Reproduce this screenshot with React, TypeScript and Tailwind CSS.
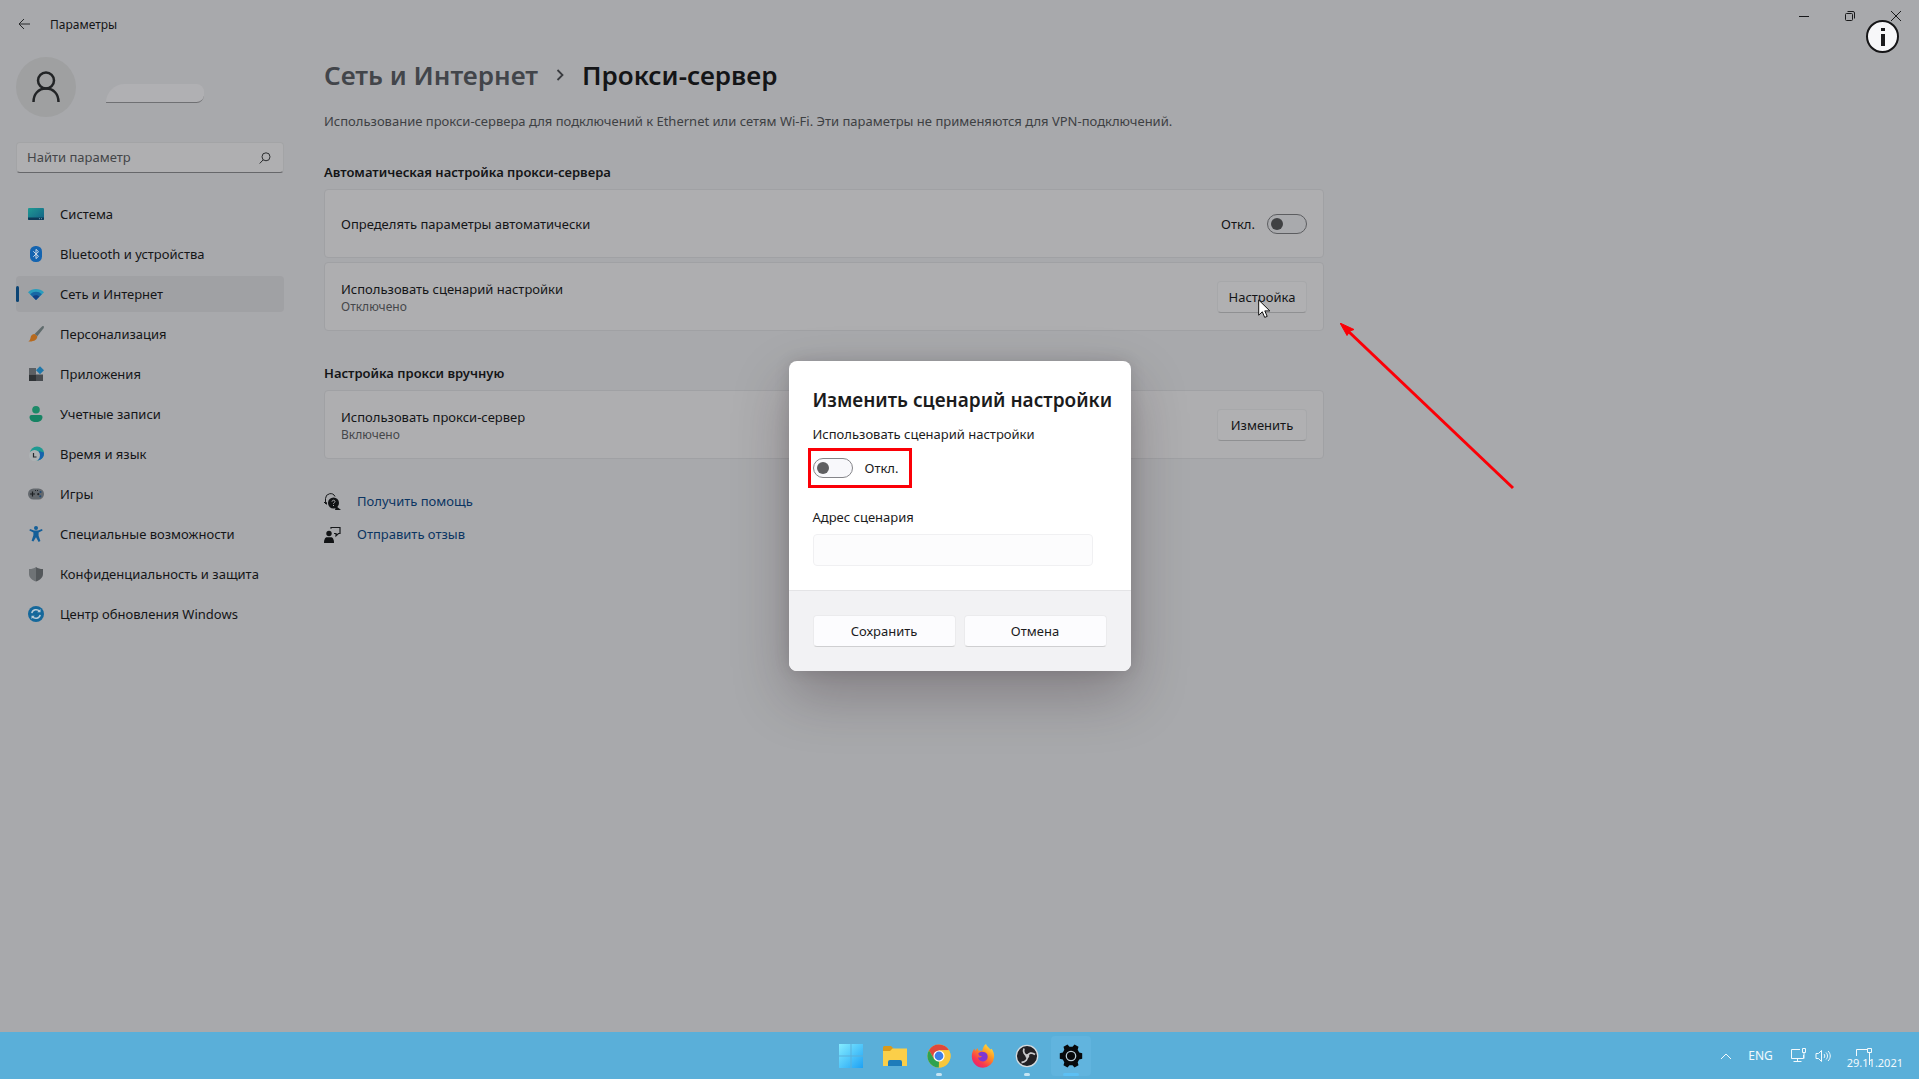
import { useState, type ReactNode } from "react";

const navItems = [
  { id: "system", label: "Система" },
  { id: "bluetooth", label: "Bluetooth и устройства" },
  { id: "network", label: "Сеть и Интернет" },
  { id: "personalization", label: "Персонализация" },
  { id: "apps", label: "Приложения" },
  { id: "accounts", label: "Учетные записи" },
  { id: "time", label: "Время и язык" },
  { id: "games", label: "Игры" },
  { id: "accessibility", label: "Специальные возможности" },
  { id: "privacy", label: "Конфиденциальность и защита" },
  { id: "update", label: "Центр обновления Windows" },
];

const navIcons: Record<string, ReactNode> = {
  system: (
    <>
      <defs>
        <linearGradient id="sys" x1="0" y1="0" x2="1" y2="1">
          <stop offset="0" stopColor="#1f9a93" />
          <stop offset="1" stopColor="#125f86" />
        </linearGradient>
      </defs>
      <rect y="2" width="16" height="12" rx="1" fill="url(#sys)" />
      <path d="M0 11.500h16V13a1 1 0 0 1-1 1H1a1 1 0 0 1-1-1z" fill="#0d3a58" />
      <path d="M11 12.700h1M13 12.700h1" stroke="#7fb3c9" strokeWidth=".8" />
    </>
  ),
  bluetooth: (
    <>
      <rect x="2" width="12" height="16" rx="5.500" fill="#1464b0" />
      <path d="M5.300 5.300l5.200 5L8 12.600V3.400l2.500 2.300-5.200 5" fill="none" stroke="#d0dae6" strokeWidth="1" />
    </>
  ),
  network: (
    <>
      <path d="M0 6.200C4.500 1.800 11.500 1.800 16 6.200L8 14z" fill="#2a9dbd" />
      <path d="M2.200 8.300C5.500 5 10.500 5 13.800 8.300L8 14z" fill="#1767a4" />
      <path d="M4.600 10.600c2-1.900 4.800-1.900 6.800 0L8 14z" fill="#123f84" />
    </>
  ),
  personalization: (
    <>
      <path d="M15.600.3c.6.500.4 1.300-.2 2.200L9.300 10.300 6.600 8.100 13.500.900c.7-.7 1.500-1 2.100-.6z" fill="#5f6b6c" />
      <path d="M6.600 8.100l2.700 2.200c.2 3.300-3.400 5.700-9 5.200 1.800-.8 1.900-2.200 2.300-4 .4-2 2-3.500 4-3.400z" fill="#b76a1e" />
    </>
  ),
  apps: (
    <>
      <path d="M1 2h7v6.500H1z" fill="#5b5f63" />
      <path d="M1 8.500h7V15H1z" fill="#2f3336" />
      <path d="M8 8.500h7V15H8z" fill="#484c50" />
      <path d="M12 .3l4 4-4 4-4-4z" fill="#1f77a9" />
    </>
  ),
  accounts: (
    <>
      <circle cx="8" cy="3.800" r="3.800" fill="#1c8a68" />
      <path d="M1.500 11a2 2 0 0 1 2-2h9a2 2 0 0 1 2 2c0 3-2.500 5-6.500 5s-6.500-2-6.500-5z" fill="#168363" />
    </>
  ),
  time: (
    <>
      <circle cx="9" cy="7.500" r="7" fill="#1e9a92" />
      <path d="M11 5l4.900 1.500a7 7 0 0 1-6 8z" fill="#1663ac" />
      <circle cx="6.500" cy="9.500" r="5.500" fill="#aeb2b4" />
      <path d="M5.500 7v4h3" fill="none" stroke="#22282c" strokeWidth="1.200" />
    </>
  ),
  games: (
    <>
      <rect y="2.500" width="16" height="11" rx="5.500" fill="#63686d" />
      <path d="M2 8h5M4.500 5.500v5" stroke="#1d2023" strokeWidth="1.200" />
      <circle cx="12.500" cy="6" r="1.100" fill="#244a72" />
      <circle cx="10.300" cy="8.200" r="1.100" fill="#202428" />
      <circle cx="12.300" cy="10.300" r="1.100" fill="#244a72" />
      <path d="M7 4.500h1M9 4.500h1" stroke="#202428" />
    </>
  ),
  accessibility: (
    <>
      <circle cx="8" cy="2" r="2" fill="#145f99" />
      <path d="M2 2.900l4 1.600h4l4-1.600.6 1.500-4 2v3.300l1.800 5.400-1.800.8L8 11.300 5.400 15.500l-1.800-.8 1.800-5.400V6.400l-4-2z" fill="#145f99" />
    </>
  ),
  privacy: (
    <>
      <path d="M8 1c2 1.500 4 2 7 2v5c0 3.500-3 6-7 7.500z" fill="#54585b" />
      <path d="M8 1C6 2.500 4 3 1 3v5c0 3.500 3 6 7 7.500z" fill="#6f7376" />
    </>
  ),
  update: (
    <>
      <circle cx="8" cy="8" r="8" fill="#15689b" />
      <path d="M3.800 7.200a4.400 4.400 0 0 1 7.800-1.800M12.200 8.800a4.400 4.400 0 0 1-7.800 1.800" fill="none" stroke="#b9ccd8" strokeWidth="1.500" />
      <path d="M12.500 3v3.300H9.200zM3.500 13V9.700h3.300z" fill="#b9ccd8" />
    </>
  ),
};

function Toggle({ id, light }: { id: string; light?: boolean }) {
  const [on, setOn] = useState(false);
  return (
    <input
      id={id}
      type="checkbox"
      role="switch"
      checked={on}
      onChange={() => setOn(!on)}
      className={`h-5 w-10 shrink-0 appearance-none rounded-full border before:mt-[3px] before:ml-[3px] before:block before:size-3 before:rounded-full checked:before:ml-[23px] ${
        light
          ? "border-[#858589] bg-[#f8f8fb] before:bg-[#5f5f61]"
          : "border-[#5c5d60] bg-[#a9aaad] before:bg-[#404143]"
      }`}
    />
  );
}

function Card({ title, note, children }: { title: string; note?: string; children: ReactNode }) {
  return (
    <div className="flex h-[69px] items-center justify-between rounded border border-[#a0a1a4] bg-[#aeaeb0] px-4">
      <div>
        <p className="text-[13px] leading-5">{title}</p>
        {note && <p className="text-xs leading-4 text-[#45474a]">{note}</p>}
      </div>
      {children}
    </div>
  );
}

function CardButton({ children }: { children: ReactNode }) {
  return (
    <button className="h-8 w-[90px] rounded border border-[#a7a8aa] border-b-[#8f9092] bg-[#b0b0b2] text-[13px] leading-5">
      {children}
    </button>
  );
}

function Sidebar() {
  const [active, setActive] = useState("network");
  return (
    <aside className="w-[268px] shrink-0">
      <div className="flex h-[60px] items-center gap-[30px]">
        <div className="flex size-[60px] items-center justify-center rounded-full bg-[#9fa0a1]">
          <svg width="28" height="32" viewBox="0 0 28 32" fill="none" stroke="#222426" strokeWidth="2.500">
            <circle cx="14" cy="9.500" r="8" />
            <path d="M1.500 31c0-8 5-13.500 12.500-13.500S26.500 23 26.500 31" />
          </svg>
        </div>
        <div className="mt-3 h-[19px] w-[98px] rounded-tl-[20px] rounded-r-lg border-b border-[#6f7073] bg-[#b0b0b3]" />
      </div>

      <div className="mt-[25px] flex h-[31px] items-center rounded border border-[#a3a4a6] border-b-[#66676a] bg-[#afafb1] pr-3 pl-[10px]">
        <input
          type="text"
          aria-label="Найти параметр"
          placeholder="Найти параметр"
          className="min-w-0 flex-1 bg-transparent text-[13px] outline-none placeholder:text-[#434548]"
        />
        <svg width="12" height="12" viewBox="0 0 12 12" fill="none" stroke="#2c2e30">
          <circle cx="7" cy="4.800" r="4" />
          <path d="M4.200 7.800L.7 11.500" />
        </svg>
      </div>

      <nav className="mt-[23px] flex flex-col gap-1">
        {navItems.map((item) => (
          <button
            key={item.id}
            onClick={() => setActive(item.id)}
            className={`flex h-9 items-center rounded text-left text-[13px] leading-5 whitespace-nowrap ${
              active === item.id ? "bg-[#a0a1a4]" : ""
            }`}
          >
            <span className={`mr-[9px] h-4 w-[3px] rounded-full ${active === item.id ? "bg-[#0b4474]" : ""}`} />
            <svg width="16" height="16" viewBox="0 0 16 16" className="mr-4 shrink-0">
              {navIcons[item.id]}
            </svg>
            {item.label}
          </button>
        ))}
      </nav>
    </aside>
  );
}

function TitleBar() {
  return (
    <header className="flex h-12 items-center justify-between pl-[18px]">
      <div className="flex items-center gap-5">
        <button aria-label="Назад">
          <svg width="12" height="12" viewBox="0 0 12 12" fill="none" stroke="#26282a">
            <path d="M12 6H1M6 1L1 6l5 5" />
          </svg>
        </button>
        <span className="pt-[2px] text-xs">Параметры</span>
      </div>
      <div className="relative flex h-8 self-start">
        <button aria-label="Свернуть" className="flex w-[46px] items-center justify-center">
          <svg width="10" height="10" viewBox="0 0 10 10" stroke="#18191b">
            <path d="M0 5.500h10" />
          </svg>
        </button>
        <button aria-label="Развернуть" className="flex w-[46px] items-center justify-center">
          <svg width="10" height="10" viewBox="0 0 10 10" fill="none" stroke="#18191b">
            <rect x=".5" y="2.500" width="7" height="7" rx="1" />
            <path d="M2.500 .5H8a1.500 1.500 0 0 1 1.500 1.500v5.500" />
          </svg>
        </button>
        <button aria-label="Закрыть" className="flex w-[46px] items-center justify-center">
          <svg width="10" height="10" viewBox="0 0 10 10" stroke="#18191b">
            <path d="M0 0l10 10M10 0L0 10" />
          </svg>
        </button>
        <button
          aria-label="Информация"
          className="absolute top-5 right-5 flex size-[33px] items-center justify-center rounded-full border-2 border-[#151517] bg-[#f7f7f9]"
        >
          <svg width="6" height="18" viewBox="0 0 6 18" fill="#1a1a1c">
            <rect x="1" width="4" height="3" />
            <rect x="1" y="6" width="4" height="12" />
          </svg>
        </button>
      </div>
    </header>
  );
}

function ProxyPage() {
  return (
    <main className="min-w-0 max-w-[1000px] flex-1">
      <h1 className="flex h-9 items-center text-[26px] leading-9 font-semibold">
        <a href="#network" className="text-[#42454a]">Сеть и Интернет</a>
        <svg width="8" height="12" viewBox="0 0 8 12" fill="none" stroke="#3a3c40" strokeWidth="1.800" className="mx-[18px]">
          <path d="M1.500 1l5 5-5 5" />
        </svg>
        Прокси-сервер
      </h1>
      <p className="mt-[18px] text-[13px] leading-5 text-[#3d4043]">
        Использование прокси-сервера для подключений к Ethernet или сетям Wi-Fi. Эти параметры не применяются для
        VPN-подключений.
      </p>

      <h2 className="mt-[31px] text-[13px] leading-5 font-semibold">Автоматическая настройка прокси-сервера</h2>
      <div className="mt-[7px] flex flex-col gap-1">
        <Card title="Определять параметры автоматически">
          <label htmlFor="auto-detect" className="flex items-center gap-3 text-[13px] leading-5">
            Откл.
            <Toggle id="auto-detect" />
          </label>
        </Card>
        <div className="relative">
          <Card title="Использовать сценарий настройки" note="Отключено">
            <CardButton>Настройка</CardButton>
          </Card>
          {/* mouse pointer */}
          <svg width="13" height="20" viewBox="0 0 13 20" className="absolute top-[37px] right-[53px]">
            <path d="M.7 1v15.200l3.600-3.400 2.400 5.600 2.500-1-2.400-5.500h5z" fill="#fff" stroke="#111" />
          </svg>
          {/* arrow pointing at the setup card */}
          <svg width="176" height="168" viewBox="0 0 176 168" className="absolute top-[61px] left-full ml-4">
            <path d="M8 8l165 157" stroke="#fb0007" strokeWidth="3" />
            <path d="M0 0l14 6.500-4 1.500-3 4.500z" fill="#fb0007" stroke="#fb0007" />
          </svg>
        </div>
      </div>

      <h2 className="mt-8 text-[13px] leading-5 font-semibold">Настройка прокси вручную</h2>
      <div className="mt-[7px]">
        <Card title="Использовать прокси-сервер" note="Включено">
          <CardButton>Изменить</CardButton>
        </Card>
      </div>

      <div className="mt-8 flex flex-col gap-[13px] text-[13px] leading-5 text-[#0b3562]">
        <a href="#help" className="flex items-center gap-4">
          <svg width="17" height="17" viewBox="0 0 17 17" fill="none">
            <path d="M1.500 11V5.500a5 5 0 0 1 9.500-2M0 9.500h2.500v2" stroke="#17191b" />
            <circle cx="9.500" cy="10" r="5.500" fill="#111315" />
            <path d="M12 13l5 4h-6z" fill="#111315" />
            <path d="M8 8.700c0-2 3-1.900 3-.1 0 1.100-1.500 1-1.500 2.200M9.500 12v1" stroke="#a9aaad" />
          </svg>
          Получить помощь
        </a>
        <a href="#feedback" className="flex items-center gap-4">
          <svg width="17" height="17" viewBox="0 0 17 17" fill="none">
            <circle cx="5" cy="7.500" r="2.700" fill="#111315" />
            <path d="M0 17c0-4 1.500-5.700 3-5.700h4c1.500 0 3 1.700 3 5.700z" fill="#111315" />
            <path d="M7 2.800V1.500h9v6h-1.500L12 9.800V7.500h-2" stroke="#17191b" strokeWidth="1.200" />
          </svg>
          Отправить отзыв
        </a>
      </div>
    </main>
  );
}

function ScriptDialog() {
  return (
    <div
      role="dialog"
      aria-labelledby="dialog-title"
      className="w-[342px] overflow-hidden rounded-lg bg-white text-[#1b1b1c] shadow-[0_24px_56px_rgba(40,20,28,0.28),0_0_16px_rgba(0,0,0,0.12)]"
    >
      <div className="h-[230px] border-b border-[#e4e4e6] px-6 pt-[25px]">
        <h2 id="dialog-title" className="text-[19px] leading-7 font-semibold whitespace-nowrap">
          Изменить сценарий настройки
        </h2>
        <p className="mt-[10px] text-[13px] leading-5">Использовать сценарий настройки</p>
        <label
          htmlFor="use-script"
          className="mt-1 -ml-[5px] flex h-10 w-[104px] items-center gap-3 border-3 border-[#fb0007] pl-[2px] text-[13px] leading-5"
        >
          <Toggle id="use-script" light />
          Откл.
        </label>
        <label htmlFor="script-url" className="mt-[19px] block text-[13px] leading-5">
          Адрес сценария
        </label>
        <input
          id="script-url"
          type="text"
          disabled
          className="mt-[7px] h-8 w-[280px] rounded border border-[#f0f0f2] bg-[#fcfcfd]"
        />
      </div>
      <div className="grid grid-cols-2 gap-2 bg-[#f2f2f4] px-6 py-6 text-[13px] leading-5">
        <button className="h-8 rounded border border-[#ebebed] border-b-[#cfcfd1] bg-[#fcfcfe]">Сохранить</button>
        <button className="h-8 rounded border border-[#ebebed] border-b-[#cfcfd1] bg-[#fcfcfe]">Отмена</button>
      </div>
    </div>
  );
}

const taskbarApps: { label: string; running?: boolean; active?: boolean; icon: ReactNode }[] = [
  {
    label: "Пуск",
    icon: (
      <>
        <defs>
          <linearGradient id="win" x1="0" y1="0" x2="1" y2="1">
            <stop offset="0" stopColor="#84ecff" />
            <stop offset="1" stopColor="#1ea2f5" />
          </linearGradient>
        </defs>
        <path d="M0 0h11.500v11.500H0zM12.500 0H24v11.500H12.500zM0 12.500h11.500V24H0zM12.500 12.500H24V24H12.500z" fill="url(#win)" />
      </>
    ),
  },
  {
    label: "Проводник",
    icon: (
      <>
        <path d="M0 3.500a1.500 1.500 0 0 1 1.500-1.500H8l3 3v5H0z" fill="#d99a1b" />
        <path d="M0 7h7l2.500-2.500H24V22H0z" fill="#fbcf49" />
        <path d="M5 22v-4a2 2 0 0 1 2-2h10a2 2 0 0 1 2 2v4z" fill="#1e7cba" />
      </>
    ),
  },
  {
    label: "Google Chrome",
    running: true,
    icon: (
      <>
        <circle cx="12" cy="12" r="11.500" fill="#f8c73d" />
        <path d="M2 6.200A11.500 11.500 0 0 1 22 6.300H12L7 15z" fill="#e0483b" />
        <path d="M2 6.200l5 8.700 5 2.800L11.800 23.500A11.500 11.500 0 0 1 2 6.200z" fill="#2fa24f" />
        <path d="M11.800 23.500l5-8.600L12 6.300h10a11.500 11.500 0 0 1-10.200 17.200z" fill="#f8c73d" />
        <circle cx="12" cy="12" r="5.600" fill="#fff" />
        <circle cx="12" cy="12" r="4.400" fill="#3d7fe8" />
      </>
    ),
  },
  {
    label: "Firefox",
    icon: (
      <>
        <defs>
          <linearGradient id="fox" x1=".9" y1="0" x2=".2" y2="1">
            <stop offset="0" stopColor="#fff04a" />
            <stop offset=".4" stopColor="#ff9420" />
            <stop offset=".75" stopColor="#f93a4c" />
            <stop offset="1" stopColor="#e3207c" />
          </linearGradient>
        </defs>
        <path d="M15 0c1 2.500 3 3.500 4.500 5.500l1.200-.7c2 3 2.800 5.800 2.300 9A11.200 11.200 0 0 1 12 23.700 11.300 11.300 0 0 1 .8 12.500c0-3.500 1-6 2.800-8L4 7l2.500-3 .8 2.500 4 .3C12 4 12.500 1.500 15 0z" fill="url(#fox)" />
        <path d="M7.300 9.500C9 7 14 7 16 10c2 3.800-.7 7.800-4.200 7.500-3.300-.3-4.800-2.500-4.600-4.500 1 .9 2.700.8 3.800-.5L8 11.500z" fill="#8036d1" />
      </>
    ),
  },
  {
    label: "OBS Studio",
    running: true,
    icon: (
      <>
        <circle cx="12" cy="12" r="10.700" fill="#222024" stroke="#d3dbe0" strokeWidth="1.300" />
        <path d="M9 4.500c-1.300 3.500.5 6.500 3.500 7.500M12.500 12c1-3 4.200-4 7.500-1.500M12.300 12c.7 3-1.500 6.300-5.800 6.500" fill="none" stroke="#c8c8cb" strokeWidth="1.800" />
        <circle cx="12.300" cy="12" r="2" fill="#c8c8cb" />
      </>
    ),
  },
  {
    label: "Параметры",
    active: true,
    icon: (
      <>
        <path d="M8.500.5l2 2.300h3l2-2.300 4 2.300-.8 3 1.500 2.600 3 .8v5.600l-3 .8-1.500 2.600.8 3-4 2.300-2-2.300h-3l-2 2.300-4-2.300.8-3-1.500-2.600-3-.8V9.200l3-.8 1.500-2.600-.8-3z" fill="#07090b" />
        <circle cx="12" cy="12" r="4.700" fill="none" stroke="#b8cbd5" strokeWidth="1.300" />
      </>
    ),
  },
];

function Taskbar() {
  return (
    <footer className="grid h-[47px] shrink-0 grid-cols-[1fr_auto_1fr] items-center bg-[#5aafd9] text-[#f3fafd]">
      <div />
      <div className="flex gap-1 pl-[2px]">
        {taskbarApps.map((app) => (
          <button
            key={app.label}
            aria-label={app.label}
            className={`relative flex size-10 items-center justify-center rounded ${app.active ? "bg-[#61b4de]" : ""}`}
          >
            <svg width="24" height="24" viewBox="0 0 24 24">
              {app.icon}
            </svg>
            {app.running && <span className="absolute bottom-0 h-[3px] w-[6px] rounded-full bg-[#c5e4f3]" />}
            {app.active && <span className="absolute bottom-0 h-[3px] w-4 rounded-full bg-[#5cc0f4]" />}
          </button>
        ))}
      </div>
      <div className="flex items-center justify-end pr-4 text-[11px]">
        <svg width="12" height="8" viewBox="0 0 12 8" fill="none" stroke="currentColor" className="mr-4">
          <path d="M1 7l5-5 5 5" />
        </svg>
        <span className="mr-[17px] text-xs leading-5">ENG</span>
        <svg width="17" height="17" viewBox="0 0 17 17" fill="none" stroke="currentColor" className="mr-2">
          <path d="M10 2.500H1.500v9h12V8M7.500 11.500v3M3.500 14.500h8M12.500 1.500h3v4h-3zM14 5.500v6" />
        </svg>
        <svg width="16" height="14" viewBox="0 0 16 14" fill="none" stroke="currentColor" className="mr-4">
          <path d="M1 4.500v5h2.500l3 3v-11l-3 3zM9 5c1 1 1 3 0 4M11 3.500c2 2 2 5 0 7M13 2c3 3 3 7 0 10" />
        </svg>
        <span className="relative mt-[14px] leading-4">
          29.11.2021
          <svg width="17" height="20" viewBox="0 0 17 20" fill="none" stroke="currentColor" className="absolute -top-2 left-[9px]">
            <path d="M.5 9V2.500H11M11.500 1.500h4v4h-4zM13.500 5.500V18" />
          </svg>
        </span>
      </div>
    </footer>
  );
}

export default function App() {
  return (
    <div className="flex min-h-screen flex-col bg-[#a8a9ac] font-['Noto_Sans','Open_Sans',sans-serif] text-[#141517]">
      <div className="relative flex-1">
        <TitleBar />
        <div className="flex gap-10 px-4 pt-[9px]">
          <Sidebar />
          <ProxyPage />
        </div>
        <div className="absolute inset-x-0 top-8 bottom-8 m-auto flex h-fit w-fit">
          <ScriptDialog />
        </div>
      </div>
      <Taskbar />
    </div>
  );
}
